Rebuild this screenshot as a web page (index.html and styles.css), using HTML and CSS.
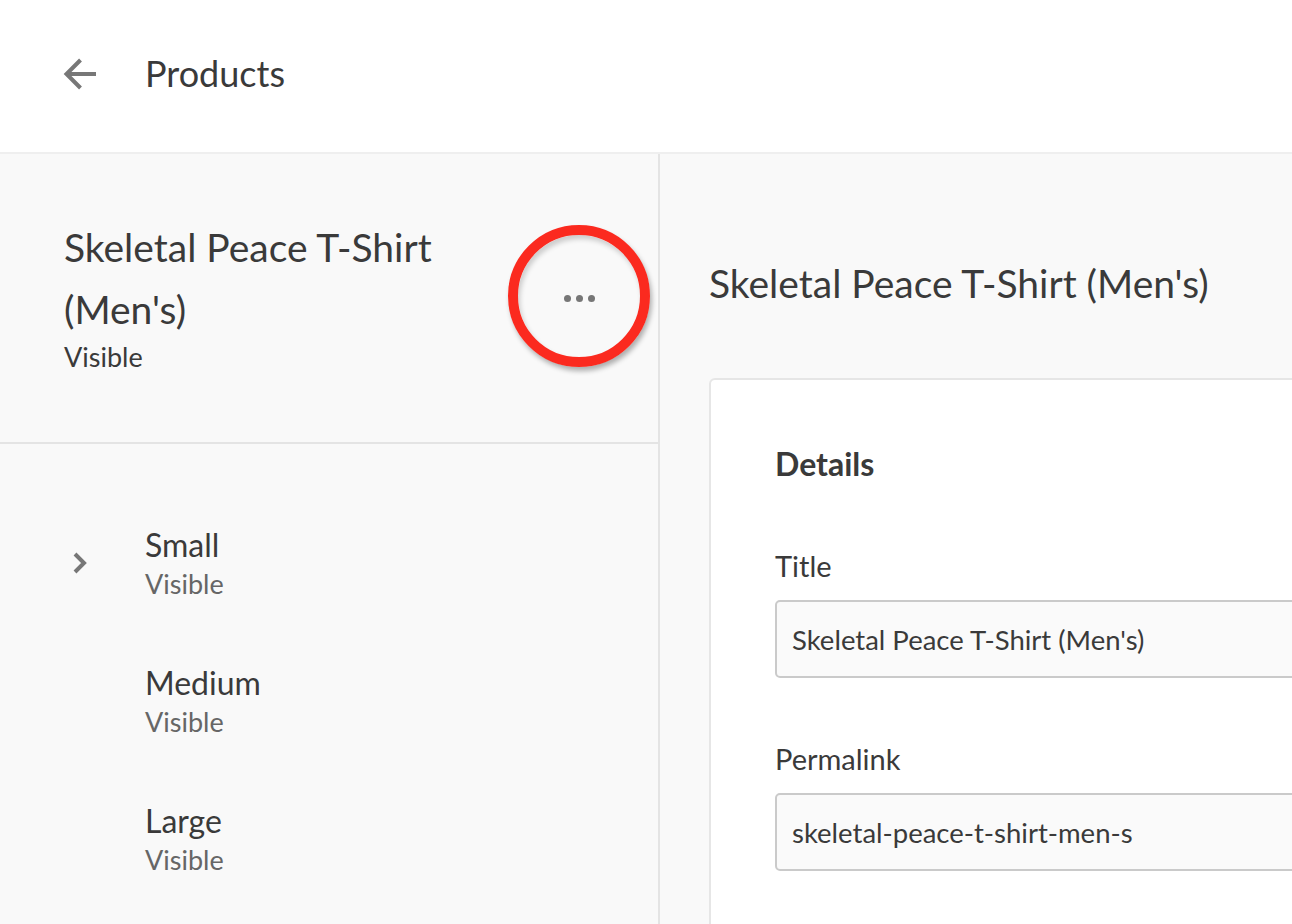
FILE: index.html
```html
<!DOCTYPE html>
<html lang="en">
<head>
<meta charset="utf-8">
<title>Products</title>
<link rel="stylesheet" href="styles.css">
</head>
<body>
<header class="topbar">
  <svg class="back" width="34" height="34" viewBox="0 0 34 34" aria-hidden="true">
    <path d="M3 17H33" fill="none" stroke="#777" stroke-width="4"/>
    <path d="M17.5 3 L3.5 17 L17.5 31" fill="none" stroke="#777" stroke-width="4"/>
  </svg>
  <span class="topbar-title">Products</span>
</header>
<div class="main">
  <aside class="left">
    <div class="product-head">
      <div class="product-info">
        <div class="product-title">Skeletal Peace T-Shirt (Men's)</div>
        <div class="product-status">Visible</div>
      </div>
      <button class="more" type="button" aria-label="More">
        <span class="dot"></span><span class="dot"></span><span class="dot"></span>
      </button>
    </div>
    <ul class="variants">
      <li class="variant">
        <span class="chev">
          <svg width="18" height="24" viewBox="0 0 18 24" aria-hidden="true"><path d="M4 3 L13 12 L4 21" fill="none" stroke="#777" stroke-width="4"/></svg>
        </span>
        <div class="variant-text"><div class="variant-name">Small</div><div class="variant-status">Visible</div></div>
      </li>
      <li class="variant">
        <span class="chev"></span>
        <div class="variant-text"><div class="variant-name">Medium</div><div class="variant-status">Visible</div></div>
      </li>
      <li class="variant">
        <span class="chev"></span>
        <div class="variant-text"><div class="variant-name">Large</div><div class="variant-status">Visible</div></div>
      </li>
    </ul>
  </aside>
  <section class="right">
    <h1 class="page-title">Skeletal Peace T-Shirt (Men's)</h1>
    <div class="card">
      <h2 class="card-title">Details</h2>
      <label class="field-label">Title</label>
      <div class="input">Skeletal Peace T-Shirt (Men's)</div>
      <label class="field-label second">Permalink</label>
      <div class="input">skeletal-peace-t-shirt-men-s</div>
    </div>
  </section>
</div>
</body>
</html>
```
FILE: styles.css
```css
* { box-sizing: border-box; }
html, body { margin: 0; padding: 0; }
body {
  width: 1292px;
  height: 924px;
  overflow: hidden;
  font-family: Lato, "Source Sans Pro", "Noto Sans", sans-serif;
  color: #3a3a3a;
  background: #f9f9f9;
}
.topbar {
  height: 154px;
  background: #fff;
  border-bottom: 2px solid #efefef;
  display: flex;
  align-items: center;
  padding: 0 0 6px 63px;
}
.back { display: block; margin-top: 2px; }
.topbar-title {
  margin-left: 48px;
  font-size: 36px;
  line-height: 40px;
  color: #3a3a3a;
}
.main {
  display: flex;
  height: 770px;
}
.left {
  width: 660px;
  flex: none;
  background: #f9f9f9;
  border-right: 2px solid #e4e4e4;
}
.product-head {
  height: 290px;
  border-bottom: 2px solid #e4e4e4;
  display: flex;
  align-items: center;
  justify-content: space-between;
  padding: 0 8px 0 64px;
}
.product-info { width: 400px; margin-top: -6px; }
.product-title {
  font-size: 39px;
  line-height: 62px;
  color: #3a3a3a;
}
.product-status {
  font-size: 27px;
  line-height: 34px;
  color: #3a3a3a;
}
.more {
  width: 142px;
  height: 142px;
  border-radius: 50%;
  border: 10px solid #fb2a1f;
  background: transparent;
  box-shadow: 2px 4px 5px rgba(0,0,0,0.3), inset 2px 4px 5px rgba(0,0,0,0.18);
  display: flex;
  align-items: center;
  justify-content: center;
  gap: 5px;
  padding: 4px 0 0 0;
  margin-top: -4px;
}
.dot {
  width: 7px;
  height: 7px;
  border-radius: 50%;
  background: #777;
}
.variants {
  list-style: none;
  margin: 0;
  padding: 51px 0 0 0;
}
.variant {
  display: flex;
  align-items: center;
  padding: 30px 0;
}
.chev {
  width: 145px;
  padding-left: 71px;
  display: flex;
  align-items: center;
}
.chev svg { display: block; margin-top: -2px; }
.variant-name {
  font-size: 32px;
  line-height: 40px;
  color: #3a3a3a;
}
.variant-status {
  font-size: 27px;
  line-height: 38px;
  color: #666;
}
.right {
  flex: 1;
  padding: 98px 0 0 49px;
  overflow: hidden;
}
.page-title {
  margin: 0;
  font-weight: normal;
  font-size: 39px;
  line-height: 62px;
  color: #3a3a3a;
  white-space: nowrap;
}
.card {
  margin-top: 64px;
  width: 800px;
  height: 600px;
  background: #fff;
  border: 2px solid #e6e6e6;
  border-radius: 6px;
  padding: 64px 0 0 64px;
}
.card-title {
  margin: 0;
  font-size: 32px;
  line-height: 40px;
  font-weight: bold;
  color: #3a3a3a;
}
.field-label {
  display: block;
  margin-top: 64px;
  font-size: 29px;
  line-height: 36px;
  color: #3a3a3a;
}
.field-label.second { margin-top: 63px; }
.input {
  margin-top: 16px;
  width: 700px;
  height: 78px;
  border: 2px solid #cacaca;
  border-radius: 5px;
  background: #fafafa;
  padding: 0 0 0 15px;
  display: flex;
  align-items: center;
  font-size: 27.5px;
  color: #3a3a3a;
}
```
